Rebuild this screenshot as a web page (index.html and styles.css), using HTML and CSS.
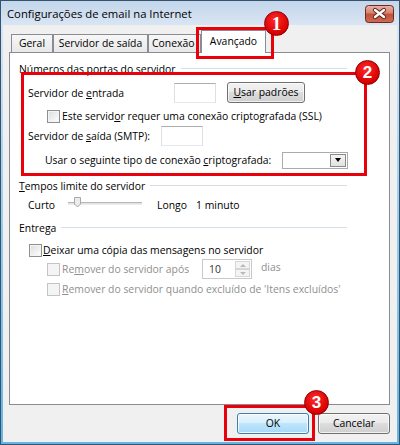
FILE: index.html
```html
<!DOCTYPE html>
<html lang="pt">
  <head>
    <meta charset="UTF-8" />
    <meta name="viewport" content="width=device-width, initial-scale=1.0" />
    <title>Configurações de email na Internet</title>
    <link rel="stylesheet" href="styles.css">
  </head>
  <body>
    <div class="screen">
      <div class="window">
        <div class="titlebar">
          <span class="title">Configurações de email na Internet</span>
          <div class="close-btn">
            <svg width="29" height="18" viewBox="0 0 29 18">
              <defs>
                <linearGradient id="closeGrad" x1="0" y1="0" x2="0" y2="1">
                  <stop offset="0" stop-color="#eab4a8" />
                  <stop offset="0.45" stop-color="#d5826f" />
                  <stop offset="0.5" stop-color="#c2513a" />
                  <stop offset="1" stop-color="#cf6c55" />
                </linearGradient>
              </defs>
              <rect x="0.5" y="0.5" width="28" height="17" rx="3" fill="url(#closeGrad)" stroke="#6e2a1e" />
              <path d="M10 5 L19 12 M19 5 L10 12" stroke="#5b2218" stroke-width="4.2" stroke-linecap="round" />
              <path d="M10 5 L19 12 M19 5 L10 12" stroke="#ffffff" stroke-width="2.4" stroke-linecap="round" />
            </svg>
          </div>
        </div>
        <div class="frame">
          <div class="client">
            <!-- Tabs -->
            <div class="tabs">
              <div class="tab tab-geral">Geral</div>
              <div class="tab tab-saida">Servidor de saída</div>
              <div class="tab tab-conexao">Conexão</div>
              <div class="tab tab-avancado active">Avançado</div>
            </div>

            <div class="panel">
              <div class="group-title"><span>Números das portas do servidor</span><i class="rule"></i></div>

              <div class="row row-entrada">
                <span class="lbl lbl-entrada">Servidor de <u>e</u>ntrada</span>
                <div class="textbox tb-port"></div>
                <div class="btn btn-defaults"><u>U</u>sar padrões</div>
              </div>

              <div class="row row-ssl">
                <span class="check"></span>
                <span class="check-label">Este servid<u>o</u>r requer uma conexão criptografada (SSL)</span>
              </div>

              <div class="row row-smtp">
                <span class="lbl lbl-smtp">Servidor de <u>s</u>aída (SMTP):</span>
                <div class="textbox tb-port"></div>
              </div>

              <div class="row row-cripto">
                <span class="lbl lbl-cripto">Usar o seguinte tipo de conexão <u>c</u>riptografada:</span>
                <div class="combo">
                  <div class="combo-btn"><i class="arrow-down"></i></div>
                </div>
              </div>

              <div class="group-title group-tempos"><span><u>T</u>empos limite do servidor</span><i class="rule"></i></div>

              <div class="row row-slider">
                <span class="lbl lbl-curto">Curto</span>
                <div class="slider">
                  <div class="track"></div>
                  <svg class="thumb" width="7" height="11" viewBox="0 0 7 11">
                    <path d="M0.5 0.5 H6.5 V7 L3.5 10 L0.5 7 Z" fill="#ececec" stroke="#a8a8a8" />
                  </svg>
                </div>
                <span class="lbl lbl-longo">Longo</span>
                <span class="lbl">1 minuto</span>
              </div>

              <div class="group-title group-entrega"><span>Entrega</span><i class="rule"></i></div>

              <div class="row row-check1">
                <span class="check"></span>
                <span class="check-label tight"><u>D</u>eixar uma cópia das mensagens no servidor</span>
              </div>

              <div class="row row-check2 disabled">
                <span class="check"></span>
                <span class="check-label lbl-apos">Re<u>m</u>over do servidor após</span>
                <div class="spin">
                  <span class="spin-value">10</span>
                  <div class="spin-btns">
                    <div class="spin-btn"><i class="arrow-up"></i></div>
                    <div class="spin-btn"><i class="arrow-down small"></i></div>
                  </div>
                </div>
                <span class="lbl lbl-dias">dias</span>
              </div>

              <div class="row row-check3 disabled">
                <span class="check"></span>
                <span class="check-label"><u>R</u>emover do servidor quando excluído de 'Itens excluídos'</span>
              </div>
            </div>

            <div class="actions">
              <div class="btn btn-ok">OK</div>
              <div class="btn btn-cancel">Cancelar</div>
            </div>
          </div>
        </div>
      </div>

      <!-- Callouts -->
      <div class="callout callout-1"></div>
      <div class="callout callout-2"></div>
      <div class="callout callout-3"></div>
      <span class="badge badge-1">1</span>
      <span class="badge badge-2">2</span>
      <span class="badge badge-3">3</span>
    </div>
  </body>
</html>
```

FILE: styles.css
```css
/* General */
* {
  box-sizing: border-box;
}

body {
  margin: 0;
  font-family: "Open Sans", "Noto Sans", sans-serif;
  font-size: 10.4px;
  color: #000;
  background: #ffffff;
}

u {
  text-decoration: underline;
  text-underline-offset: 1px;
}

.screen {
  position: relative;
  width: 400px;
  height: 445px;
}

/* Window frame */
.window {
  width: 400px;
  height: 445px;
  border: 1px solid #35536f;
  display: flex;
  flex-direction: column;
  background: #5fb2e2;
}

.titlebar {
  height: 24px;
  flex: none;
  display: flex;
  align-items: flex-start;
  justify-content: space-between;
  padding: 0 5px 0 6px;
  background: linear-gradient(#c3d6eb, #d9e5f3);
}

.title {
  font-size: 11.3px;
  line-height: 16px;
  margin-top: 5px;
  color: #000;
}

.close-btn {
  margin-top: 4px;
  height: 18px;
}

.close-btn svg {
  display: block;
}

.frame {
  flex: 1;
  padding: 0 2px 2px 2px;
  background: linear-gradient(#d9e5f3, #9fd0ee 40%, #62b5e4);
  display: flex;
}

.client {
  flex: 1;
  background: #f0f0f0;
  padding: 5px 7px 0 6px;
  display: flex;
  flex-direction: column;
}

/* Tabs */
.tabs {
  height: 22px;
  display: flex;
  align-items: flex-end;
  padding-left: 2px;
}

.tab {
  height: 18px;
  border: 1px solid #898c95;
  border-bottom: none;
  background: linear-gradient(#f7f7f7, #e8e8e8);
  text-align: center;
  line-height: 16px;
  white-space: nowrap;
}

.tab-geral {
  width: 42px;
}

.tab-saida {
  width: 95px;
}

.tab-conexao {
  width: 53px;
  text-align: left;
  padding-left: 3px;
}

.tab-avancado {
  width: 65px;
}

.tab.active {
  height: 23px;
  margin-bottom: -1px;
  background: #ffffff;
  position: relative;
  z-index: 1;
  line-height: 20px;
}

/* Panel */
.panel {
  width: 381px;
  height: 353px;
  flex: none;
  border: 1px solid #898c95;
  background: #ffffff;
  padding: 8px 0 0 9px;
  display: flex;
  flex-direction: column;
}

.group-title {
  width: 328px;
  height: 15px;
  display: flex;
  align-items: center;
  white-space: nowrap;
}

.rule {
  flex: 1;
  height: 1px;
  background: #d5dfe5;
  margin-left: 5px;
}

.group-tempos {
  margin-top: 9px;
}

.group-entrega {
  margin-top: 7px;
}

.row {
  display: flex;
  align-items: center;
  white-space: nowrap;
}

.lbl {
  flex: none;
}

.row-entrada {
  margin-top: 6px;
  height: 21px;
  margin-left: 9px;
}

.lbl-entrada {
  width: 146px;
}

.row-ssl {
  margin-top: 6px;
  height: 14px;
  margin-left: 28px;
}

.row-smtp {
  margin-top: 3px;
  height: 20px;
  margin-left: 9px;
}

.lbl-smtp {
  width: 133px;
}

.row-cripto {
  margin-top: 5px;
  height: 18px;
  margin-left: 26px;
}

.lbl-cripto {
  width: 237px;
}

.row-slider {
  margin-top: 4px;
  height: 16px;
  margin-left: 9px;
}

.lbl-curto {
  width: 40px;
}

.lbl-longo {
  width: 39px;
  margin-left: 15px;
}

.row-check1 {
  margin-top: 7px;
  height: 16px;
  margin-left: 10px;
}

.row-check2 {
  margin-top: 1px;
  height: 20px;
  margin-left: 28px;
}

.row-check3 {
  margin-top: 2px;
  height: 16px;
  margin-left: 28px;
}

.disabled {
  color: #8f8f8f;
}

/* Inputs */
.textbox {
  height: 20px;
  background: #ffffff;
  border: 1px solid #e3e9ef;
  border-top-color: #abadb3;
  border-left-color: #dbdfe6;
  border-right-color: #dbdfe6;
}

.tb-port {
  width: 42px;
}

.check {
  width: 13px;
  height: 13px;
  flex: none;
  border: 1px solid #8e8f8f;
  background: linear-gradient(135deg, #dcdcdc, #ffffff);
  box-shadow: inset 0 0 0 1px #f4f4f4;
}

.disabled .check {
  border-color: #c4c4c4;
  background: #f4f4f4;
}

.check-label {
  margin-left: 2px;
}

.check-label.tight {
  margin-left: 1px;
}

.lbl-apos {
  width: 140px;
}

.lbl-dias {
  margin-left: 9px;
  margin-bottom: 4px;
}

/* Buttons */
.btn {
  height: 21px;
  border: 1px solid #707070;
  border-radius: 3px;
  background: linear-gradient(#f2f2f2 0%, #ebebeb 45%, #dddddd 50%, #cfcfcf 100%);
  box-shadow: inset 0 0 0 1px rgba(255, 255, 255, 0.7);
  text-align: center;
  line-height: 19px;
  flex: none;
}

.btn-defaults {
  width: 78px;
  margin-left: 11px;
}

.actions {
  margin-top: 8px;
  display: flex;
  justify-content: flex-end;
  gap: 9px;
}

.btn-ok,
.btn-cancel {
  width: 72px;
}

.btn-ok {
  border-color: #3c7fb1;
  background: linear-gradient(#eaf6fd 0%, #d9f0fc 45%, #bee6fd 50%, #a7d9f5 100%);
  box-shadow: inset 0 0 0 1px rgba(255, 255, 255, 0.8);
}

/* Combo box */
.combo {
  width: 66px;
  height: 17px;
  border: 1px solid #ababab;
  background: #ffffff;
  display: flex;
  justify-content: flex-end;
  padding: 1px;
}

.combo-btn {
  width: 16px;
  height: 13px;
  border: 1px solid #8a8a8a;
  background: linear-gradient(#f4f4f4, #e2e2e2);
  display: flex;
  align-items: center;
  justify-content: center;
}

.arrow-down {
  width: 0;
  height: 0;
  border-left: 3.5px solid transparent;
  border-right: 3.5px solid transparent;
  border-top: 4px solid #000;
}

.arrow-down.small,
.arrow-up {
  border-left-width: 3px;
  border-right-width: 3px;
}

.arrow-down.small {
  border-top: 3px solid #b9b9b9;
}

.arrow-up {
  width: 0;
  height: 0;
  border-left: 3px solid transparent;
  border-right: 3px solid transparent;
  border-bottom: 3px solid #b9b9b9;
}

/* Slider */
.slider {
  width: 74px;
  height: 16px;
  position: relative;
  display: flex;
  align-items: center;
}

.track {
  width: 100%;
  height: 3px;
  margin-top: -3px;
  border-top: 1px solid #b7b7b7;
  border-bottom: 1px solid #ececec;
  background: #e3e3e3;
}

.thumb {
  position: absolute;
  left: 6px;
  top: 0;
}

/* Spin box */
.spin {
  width: 50px;
  height: 20px;
  border: 1px solid #c9c9c9;
  background: #ffffff;
  display: flex;
  align-items: center;
  justify-content: space-between;
  padding: 1px;
}

.spin-value {
  color: #333;
  margin-left: 5px;
}

.spin-btns {
  width: 15px;
  height: 100%;
  display: flex;
  flex-direction: column;
}

.spin-btn {
  flex: 1;
  border: 1px solid #d6d6d6;
  background: #f4f4f4;
  display: flex;
  align-items: center;
  justify-content: center;
}

/* Callouts */
.callout {
  position: absolute;
  border: 3px solid #e8000b;
}

.callout-1 {
  left: 196px;
  top: 27px;
  width: 78px;
  height: 32px;
}

.callout-2 {
  left: 21px;
  top: 72px;
  width: 346px;
  height: 104px;
}

.callout-3 {
  left: 224px;
  top: 405px;
  width: 91px;
  height: 36px;
}

.badge {
  position: absolute;
  width: 25px;
  height: 25px;
  border-radius: 50%;
  background: radial-gradient(circle at 45% 35%, #ff2a2a, #d80000 70%, #b80000);
  border: 1px solid #8c0000;
  color: #ffffff;
  font-family: "Liberation Sans", Arial, sans-serif;
  font-weight: bold;
  font-size: 17px;
  line-height: 23px;
  text-align: center;
}

.badge-1 {
  left: 264px;
  top: 11px;
  font-family: "Liberation Serif", "Times New Roman", serif;
  font-size: 19px;
}

.badge-2 {
  left: 355px;
  top: 60px;
}

.badge-3 {
  left: 304px;
  top: 390px;
}
```
